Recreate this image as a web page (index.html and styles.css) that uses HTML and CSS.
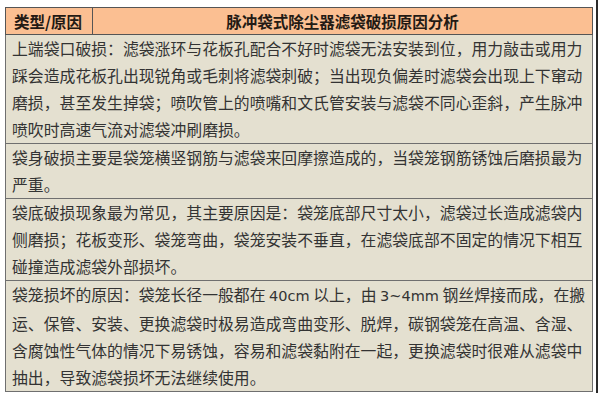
FILE: index.html
```html
<!DOCTYPE html>
<html lang="zh">
<head>
<meta charset="utf-8">
<link rel="stylesheet" href="styles.css">
</head>
<body>
<div class="page">
  <table class="grid">
    <colgroup><col class="c1"><col class="c2"></colgroup>
    <tr class="head">
      <th class="h1">类型/原因</th>
      <th class="h2">脉冲袋式除尘器滤袋破损原因分析</th>
    </tr>
    <tr>
      <td colspan="2">上端袋口破损：滤袋涨环与花板孔配合不好时滤袋无法安装到位，用力敲击或用力<br>踩会造成花板孔出现锐角或毛刺将滤袋刺破；当出现负偏差时滤袋会出现上下窜动<br>磨损，甚至发生掉袋；喷吹管上的喷嘴和文氏管安装与滤袋不同心歪斜，产生脉冲<br>喷吹时高速气流对滤袋冲刷磨损。</td>
    </tr>
    <tr>
      <td colspan="2">袋身破损主要是袋笼横竖钢筋与滤袋来回摩擦造成的，当袋笼钢筋锈蚀后磨损最为<br>严重。</td>
    </tr>
    <tr>
      <td colspan="2">袋底破损现象最为常见，其主要原因是：袋笼底部尺寸太小，滤袋过长造成滤袋内<br>侧磨损；花板变形、袋笼弯曲，袋笼安装不垂直，在滤袋底部不固定的情况下相互<br>碰撞造成滤袋外部损坏。</td>
    </tr>
    <tr>
      <td colspan="2">袋笼损坏的原因：袋笼长径一般都在 <span class="lat">40cm</span> 以上，由 <span class="lat">3~4mm</span> 钢丝焊接而成，在搬<br>运、保管、安装、更换滤袋时极易造成弯曲变形、脱焊，碳钢袋笼在高温、含湿、<br>含腐蚀性气体的情况下易锈蚀，容易和滤袋黏附在一起，更换滤袋时很难从滤袋中<br>抽出，导致滤袋损坏无法继续使用。</td>
    </tr>
  </table>
  <div class="edge"></div>
</div>
</body>
</html>
```
FILE: styles.css
```css
html, body {
  margin: 0;
  padding: 0;
  background: #ffffff;
}
.page {
  display: flex;
  align-items: flex-start;
  gap: 3px;
  padding: 7px 0 0 5px;
  height: 393px;
  box-sizing: border-box;
}
.grid {
  border-collapse: collapse;
  width: 587px;
  table-layout: fixed;
  font-family: "Noto Sans CJK SC", "Noto Sans", sans-serif;
  color: #333333;
  border: 1px solid #555;
}
.c1 { width: 87px; }
.c2 { width: 500px; }
.head th {
  background: #fbbf92;
  height: 26px;
  padding: 0;
  font-size: 15.5px;
  font-weight: bold;
  color: #231a14;
  border: 1px solid #555;
  line-height: 26px;
}
.h1 {
  text-align: left;
  padding-left: 8px !important;
}
.h2 {
  text-align: center;
}
.grid td {
  background: #e4e0d0;
  border: 1px solid #6f6f6f;
  font-size: 15.85px;
  line-height: 27px;
  padding: 0 0 0 6px;
  white-space: nowrap;
  overflow: hidden;
}
.lat {
  font-family: "DejaVu Sans", sans-serif;
  font-size: 14.5px;
}
.edge {
  width: 2px;
  height: 393px;
  margin-top: -7px;
  background: #2a2a2a;
}
```
